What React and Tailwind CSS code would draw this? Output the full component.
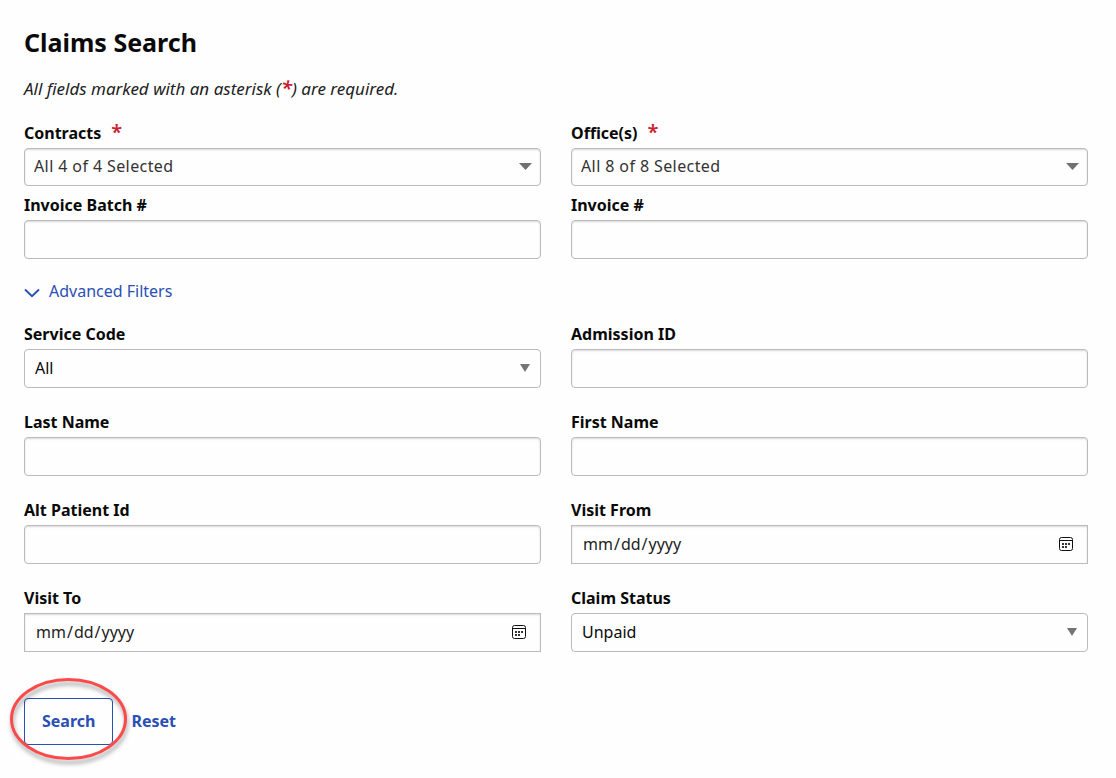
import React, { useState } from 'react';

const inputStyles =
  "block w-full h-[39px] px-3 rounded border border-[#bbbbbb] bg-[#fefefe] shadow-[inset_0_1px_2px_rgba(10,10,10,0.15)]";

function Required() {
  return <span className="text-xl leading-none font-semibold text-[#cc2030]">*</span>;
}

function Field({ id, label, required, children }) {
  return (
    <div>
      <label htmlFor={id} className="block h-7 leading-[26px] font-bold text-[#0a0a0a]">
        {label}
        {required && <span className="ml-[10px]"><Required /></span>}
      </label>
      {children}
    </div>
  );
}

function TextField({ id, label }) {
  return (
    <Field id={id} label={label}>
      <input id={id} type="text" className={inputStyles} />
    </Field>
  );
}

function DateField({ id, label }) {
  return (
    <Field id={id} label={label}>
      <div className="relative">
        <input
          id={id}
          type="date"
          className="block w-full h-[39px] pb-[2px] pl-[10px] pr-3 border border-[#bbbbbb] bg-[#fefefe] shadow-[inset_0_1px_2px_rgba(10,10,10,0.15)] [&::-webkit-calendar-picker-indicator]:opacity-0"
        />
        <svg
          className="absolute right-[15px] top-3 pointer-events-none"
          width="14"
          height="14"
          viewBox="0 0 14 14"
          fill="none"
          stroke="#111111"
        >
          <rect x="0.5" y="0.5" width="13" height="13" rx="2" />
          <path d="M0.5 3.5h13" />
          <g fill="#333333" stroke="none">
            <rect x="3" y="6" width="2" height="2" />
            <rect x="6" y="6" width="2" height="2" />
            <rect x="9" y="6" width="2" height="2" />
            <rect x="3" y="9" width="2" height="2" />
            <rect x="6" y="9" width="2" height="2" />
          </g>
        </svg>
      </div>
    </Field>
  );
}

function SelectField({ id, label, options }) {
  return (
    <Field id={id} label={label}>
      <div className="relative">
        <select
          id={id}
          className="block w-full h-[39px] pb-[2px] pl-[10px] pr-8 appearance-none rounded border border-[#bbbbbb] bg-[#fefefe] text-[#0a0a0a]"
        >
          {options.map((option) => (
            <option key={option}>{option}</option>
          ))}
        </select>
        <svg className="absolute right-[11px] top-[15px] pointer-events-none" width="10" height="8" viewBox="0 0 10 8">
          <path d="M0 0h10L5 8z" fill="#757575" />
        </svg>
      </div>
    </Field>
  );
}

// Summary drop-down used for the contract and office pickers
function MultiSelectField({ id, label, summary }) {
  return (
    <Field id={id} label={label} required>
      <div className="relative">
        <select
          id={id}
          required
          className="block w-full h-[38px] pb-[2px] pl-[9px] pr-8 appearance-none rounded border border-[#bbbbbb] bg-[#fefefe] text-[#333333] tracking-wide shadow-[inset_0_1px_2px_rgba(10,10,10,0.15)]"
        >
          <option>{summary}</option>
        </select>
        <svg className="absolute right-[9px] top-[15px] pointer-events-none" width="13" height="7" viewBox="0 0 13 7">
          <path d="M0 0h13L6.5 7z" fill="#707070" />
        </svg>
      </div>
    </Field>
  );
}

export default function App() {
  const [showAdvanced, setShowAdvanced] = useState(true);

  return (
    <main className="min-h-screen bg-[#fefefe] pl-6 pr-7 pt-[25px] pb-8 font-['Noto_Sans',sans-serif] text-base text-[#222222]">
      <h1 className="text-[25px] leading-[34px] font-bold text-[#0a0a0a]">Claims Search</h1>
      <p className="mt-[18px] h-6 text-[17px] leading-6 italic">
        All fields marked with an asterisk (<Required />) are required.
      </p>

      <form className="mt-[19px]" onSubmit={(e) => e.preventDefault()}>
        <div className="grid grid-cols-2 gap-x-[30px] gap-y-[6px]">
          <MultiSelectField id="contracts" label="Contracts" summary="All 4 of 4 Selected" />
          <MultiSelectField id="offices" label="Office(s)" summary="All 8 of 8 Selected" />
          <TextField id="invoiceBatch" label="Invoice Batch #" />
          <TextField id="invoice" label="Invoice #" />
        </div>

        <button
          type="button"
          onClick={() => setShowAdvanced(!showAdvanced)}
          className="mt-5 flex items-center gap-[9px] h-6 leading-6 text-[#2a50b4]"
        >
          <svg
            className="mt-1"
            width="16"
            height="10"
            viewBox="0 0 16 10"
            fill="none"
            stroke="currentColor"
            strokeWidth="2"
          >
            <path d="M1 1.5L8 8.2L15 1.5" />
          </svg>
          Advanced Filters
        </button>

        {showAdvanced && (
          <div className="mt-[18px] grid grid-cols-2 gap-x-[30px] gap-y-[21px]">
            <SelectField id="serviceCode" label="Service Code" options={["All"]} />
            <TextField id="admissionId" label="Admission ID" />
            <TextField id="lastName" label="Last Name" />
            <TextField id="firstName" label="First Name" />
            <TextField id="altPatientId" label="Alt Patient Id" />
            <DateField id="visitFrom" label="Visit From" />
            <DateField id="visitTo" label="Visit To" />
            <SelectField id="claimStatus" label="Claim Status" options={["Unpaid", "Paid"]} />
          </div>
        )}

        <div className="mt-[46px] flex items-center gap-[18px] font-bold text-[#2a50b4]">
          <div className="relative">
            <button type="submit" className="h-[47px] px-[17px] pb-[2px] rounded border border-[#2a50b4]">
              Search
            </button>
            {/* Red ring around the search button */}
            <svg
              className="absolute -left-[14px] -top-5 overflow-visible pointer-events-none drop-shadow-[1px_4px_2px_rgba(0,0,0,0.35)]"
              width="118"
              height="82"
              viewBox="0 0 118 82"
              fill="none"
            >
              <ellipse cx="58.5" cy="41" rx="57" ry="39.5" stroke="#fb4a4a" strokeWidth="3" />
            </svg>
          </div>
          <button type="reset" className="pb-[2px]">Reset</button>
        </div>
      </form>
    </main>
  );
}
